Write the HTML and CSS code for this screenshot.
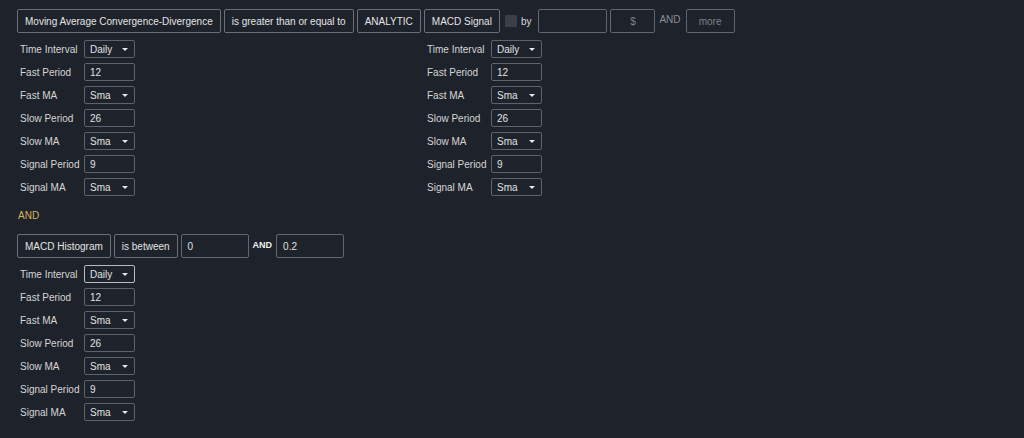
FILE: index.html
```html
<!DOCTYPE html>
<html lang="en">
<head>
  <meta charset="UTF-8" />
  <title>Screener Conditions</title>
  <link rel="stylesheet" href="styles.css">
</head>
<body>
  <div class="screen">

    <!-- condition 1 -->
    <div class="condition">
      <div class="row">
        <span class="chip">Moving Average Convergence-Divergence</span>
        <span class="chip">is greater than or equal to</span>
        <span class="chip">ANALYTIC</span>
        <span class="chip">MACD Signal</span>
        <span class="check"></span>
        <span class="by">by</span>
        <span class="field w-by"></span>
        <span class="field w-unit dim">$</span>
        <span class="and-dim">AND</span>
        <span class="field w-more dim">more</span>
      </div>

      <div class="operands">
        <div class="params left">
          <span class="label">Time Interval</span><span class="box select">Daily<i class="caret"></i></span>
          <span class="label">Fast Period</span><span class="box">12</span>
          <span class="label">Fast MA</span><span class="box select">Sma<i class="caret"></i></span>
          <span class="label">Slow Period</span><span class="box">26</span>
          <span class="label">Slow MA</span><span class="box select">Sma<i class="caret"></i></span>
          <span class="label">Signal Period</span><span class="box">9</span>
          <span class="label">Signal MA</span><span class="box select">Sma<i class="caret"></i></span>
        </div>
        <div class="params">
          <span class="label">Time Interval</span><span class="box select">Daily<i class="caret"></i></span>
          <span class="label">Fast Period</span><span class="box">12</span>
          <span class="label">Fast MA</span><span class="box select">Sma<i class="caret"></i></span>
          <span class="label">Slow Period</span><span class="box">26</span>
          <span class="label">Slow MA</span><span class="box select">Sma<i class="caret"></i></span>
          <span class="label">Signal Period</span><span class="box">9</span>
          <span class="label">Signal MA</span><span class="box select">Sma<i class="caret"></i></span>
        </div>
      </div>
    </div>

    <div class="joiner">AND</div>

    <!-- condition 2 -->
    <div class="condition">
      <div class="row">
        <span class="chip">MACD Histogram</span>
        <span class="chip">is between</span>
        <span class="field w-range">0</span>
        <span class="and-bold">AND</span>
        <span class="field w-range">0.2</span>
      </div>

      <div class="operands">
        <div class="params left">
          <span class="label">Time Interval</span><span class="box select focus">Daily<i class="caret"></i></span>
          <span class="label">Fast Period</span><span class="box">12</span>
          <span class="label">Fast MA</span><span class="box select">Sma<i class="caret"></i></span>
          <span class="label">Slow Period</span><span class="box">26</span>
          <span class="label">Slow MA</span><span class="box select">Sma<i class="caret"></i></span>
          <span class="label">Signal Period</span><span class="box">9</span>
          <span class="label">Signal MA</span><span class="box select">Sma<i class="caret"></i></span>
        </div>
      </div>
    </div>

  </div>
</body>
</html>
```

FILE: styles.css
```css
body {
  margin: 0;
  background-color: #1e222a;
  font-family: "Liberation Sans", Arial, sans-serif;
  font-size: 10px;
  color: #d8d8d8;
}

.screen {
  padding: 9px 17px;
}

.row {
  display: flex;
  align-items: center;
  gap: 3px;
  height: 24px;
}

.chip {
  display: flex;
  align-items: center;
  height: 22px;
  padding: 0 7px;
  border: 1px solid #6b6f77;
  border-radius: 2px;
  color: #e4e4e4;
  white-space: nowrap;
}

.check {
  width: 12px;
  height: 12px;
  margin-left: 2px;
  background-color: #3b4048;
  border-radius: 1px;
}

.by {
  margin: 0 4px 0 1px;
  color: #dcdcdc;
}

.field {
  display: flex;
  align-items: center;
  box-sizing: border-box;
  height: 24px;
  padding: 0 6px;
  border: 1px solid #62666e;
  border-radius: 2px;
  color: #e0e0e0;
}

.field.dim {
  justify-content: center;
  color: #7d8189;
}

.w-by { width: 69px; }
.w-unit { width: 45px; }
.w-more { width: 49px; }
.w-range { width: 68px; }

.and-dim {
  margin: 0 2px 3px 1px;
  color: #8a8e96;
}

.and-bold {
  margin: 0 1px 2px;
  font-size: 9px;
  font-weight: bold;
  color: #f0f0f0;
}

.operands {
  display: flex;
  margin-top: 7px;
}

.params {
  display: grid;
  grid-template-columns: 64px 51px;
  grid-auto-rows: 18px;
  row-gap: 5px;
  align-items: center;
}

.params.left {
  margin-left: 3px;
  width: 407px;
}

.label {
  color: #d6d6d6;
  white-space: nowrap;
}

.box {
  position: relative;
  display: flex;
  align-items: center;
  box-sizing: border-box;
  height: 18px;
  padding-left: 5px;
  border: 1px solid #5e636b;
  border-radius: 2px;
  color: #e2e2e2;
}

.box.focus {
  border-color: #b8bbc1;
}

.caret {
  position: absolute;
  right: 6px;
  top: 7px;
  width: 0;
  height: 0;
  border-left: 3px solid transparent;
  border-right: 3px solid transparent;
  border-top: 3px solid #e8e8e8;
}

.joiner {
  margin: 13px 0 11px 1px;
  line-height: 14px;
  color: #d3b55c;
}
```
